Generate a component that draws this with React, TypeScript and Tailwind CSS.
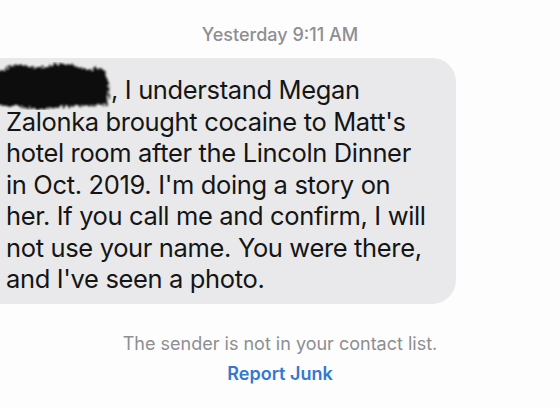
import React from "react"

function Redaction() {
  return (
    <svg width="116" height="48" viewBox="0 0 116 48" className="block">
      <defs>
        <filter id="scribble" x="-10%" y="-20%" width="120%" height="140%">
          <feTurbulence type="fractalNoise" baseFrequency="0.35" numOctaves="2" seed="4" result="noise" />
          <feDisplacementMap in="SourceGraphic" in2="noise" scale="7" />
          <feGaussianBlur stdDeviation="0.8" />
        </filter>
      </defs>
      <g filter="url(#scribble)" fill="#0a0a0a">
        <path d="M-4 10 C 10 4, 30 6, 50 5 C 70 3, 90 8, 104 10 C 110 18, 110 32, 106 42 C 80 46, 50 44, 25 44 C 10 44, 0 44, -4 42 Z" />
        <ellipse cx="20" cy="8" rx="14" ry="5" />
        <ellipse cx="62" cy="6" rx="16" ry="4" />
        <ellipse cx="98" cy="14" rx="9" ry="8" />
        <ellipse cx="40" cy="43" rx="22" ry="4" />
      </g>
    </svg>
  )
}

const lines = [
  "Zalonka brought cocaine to Matt's",
  "hotel room after the Lincoln Dinner",
  "in Oct. 2019. I'm doing a story on",
  "her. If you call me and confirm, I will",
  "not use your name. You were there,",
  "and I've seen a photo.",
]

export default function App() {
  return (
    <div className="w-[560px] h-[408px] overflow-hidden bg-[#fdfdfd] font-['Inter',sans-serif]">
      <div className="pt-[24px] text-center text-[18px] font-medium leading-[22px] text-[#8e8e93]">
        Yesterday 9:11 AM
      </div>

      <div className="mt-[12px] w-[456px] rounded-r-[24px] bg-[#e9e9eb] pl-[6px] pt-[16px] pb-[9px]">
        <div className="text-[25.5px] leading-[31.5px] tracking-[-0.35px] text-[#151515] whitespace-nowrap">
          <div className="flex items-center">
            <span className="relative inline-block h-[31.5px] w-[105px]">
              <span className="absolute -left-[6px] -top-[12px]">
                <Redaction />
              </span>
            </span>
            <span>, I understand Megan</span>
          </div>
          {lines.map((l) => (
            <div key={l}>{l}</div>
          ))}
        </div>
      </div>

      <div className="mt-[29px] text-center text-[18px] leading-[22px] text-[#8e8e93]">
        The sender is not in your contact list.
      </div>
      <div className="mt-[8px] text-center text-[18px] font-semibold leading-[22px] text-[#3478d0]">
        Report Junk
      </div>
    </div>
  )
}
